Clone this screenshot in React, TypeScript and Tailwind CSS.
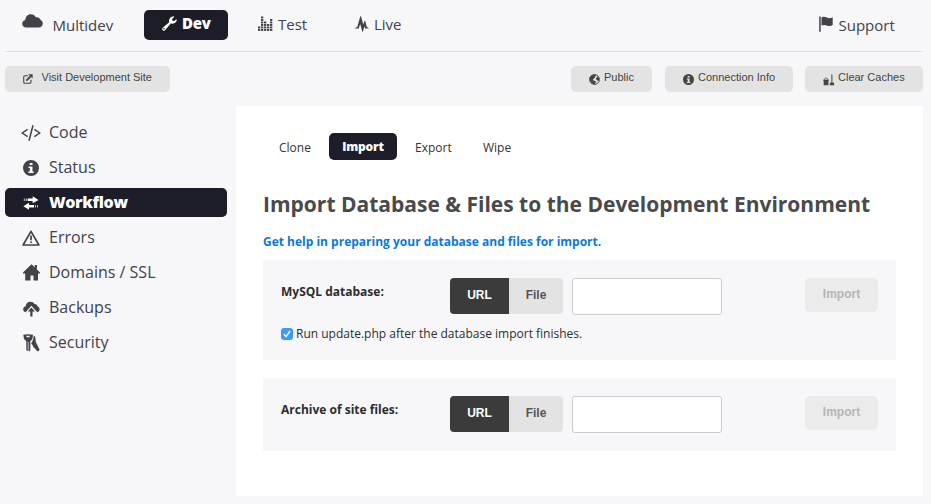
import type { ReactNode } from "react";

const CloudIcon = () => (
  <svg width="21" height="14" viewBox="0 0 21 14" fill="currentColor">
    <path d="M4.500 13.500C2 13.500.2 12 .2 9.800c0-1.900 1.300-3.300 3.100-3.700C3.400 2.600 5.800.3 8.800.3c2.300 0 4 1.100 5 2.900 2.600-.4 4.500 1 5 3.100 1.300.5 2 1.700 2 3.200 0 2.300-1.600 4-4.100 4z" />
  </svg>
);

const WrenchIcon = () => (
  <svg width="15" height="15" viewBox="0 0 15 15" fill="currentColor">
    <path d="M.5 12.100 7.100 6.300C6.500 3.600 8.200.7 11.600.3l.5.7-2 1.900.3 1.900 1.900.2 2-1.800.5.7C14.500 6.500 11.600 8.200 8.800 7.600L3 14.200c-.6.7-1.700.7-2.300 0-.6-.6-.7-1.500-.2-2.100zm1.500-.1a.8.8 0 1 0 0 1.600.8.8 0 0 0 0-1.600z" fillRule="evenodd" />
  </svg>
);

const EqualizerIcon = () => (
  <svg width="16" height="16" viewBox="0 0 16 16" fill="currentColor">
    {[2, 6, 4, 3, 5].map((n, c) =>
      Array.from({ length: n }, (_, r) => (
        <rect key={`${c}-${r}`} x={c * 3} y={13 - r * 2.5} width="2.300" height="1.900" />
      )),
    )}
  </svg>
);

const PulseIcon = () => (
  <svg width="15" height="16" viewBox="0 0 15 16" fill="currentColor">
    <path d="M.1 12.600 3.300 10.900 6.300.3H7l2.300 8.100 1.300-3.700h.6l1.500 6 2.200 1.900h-3.500l-1-2.100-1.500 5.200h-.6L6.200 7.900 4.700 12.600z" />
  </svg>
);

const FlagIcon = () => (
  <svg width="14" height="16" viewBox="0 0 14 16" fill="currentColor">
    <path d="M.2.5h1.500v15.200H.2zM2.500 1.400c2-.9 3.500-.6 5.300.2 2 .8 3.800.8 5.900-.4v7.900c-2.100 1.200-3.900 1.100-5.900.4-1.800-.7-3.300-.9-5.300 0z" />
  </svg>
);

const ExternalIcon = () => (
  <svg width="10" height="10" viewBox="0 0 10 10" fill="none" stroke="currentColor" strokeWidth="1.100">
    <path d="M5 1.700H2Q.7 1.700.7 3v5Q.7 9.300 2 9.300h4.700Q8 9.300 8 8V5.800" />
    <path d="M3.300 6.700 7.500 2.500" strokeWidth="1.900" />
    <path d="M5.200.2H9.600V4.600z" fill="currentColor" stroke="none" />
  </svg>
);

const GlobeIcon = () => (
  <svg width="11" height="11" viewBox="0 0 11 11">
    <circle cx="5.500" cy="5.500" r="4.900" fill="none" stroke="currentColor" strokeWidth="1" />
    <path d="M.8 3.500C1.500 1.500 3.800.4 6.500.8L7 2 5.800 2.600 6 3.700 4.800 4.500l-.9 1.300.9.900 1.700.2.5 1.200-1.200 2.100C3 10.300.2 7.500.8 3.500zM8.200 1.800l2 2.700-.3 2-1.100.4-.9-1.100L6.900 5.300l.3-1.500 1.200-.8z" fill="currentColor" />
  </svg>
);

const InfoIcon = ({ size }: { size: number }) => (
  <svg width={size} height={size} viewBox="0 0 16 16" fill="currentColor" fillRule="evenodd">
    <path d="M8 0a8 8 0 1 0 0 16A8 8 0 0 0 8 0zM6.700 2.900h2.800v2.200H6.700zM5.500 6.500h4v5h1.300V13H5.300v-1.500h1.500V8H5.500z" />
  </svg>
);

const BroomIcon = () => (
  <svg width="12" height="12" viewBox="0 0 12 12" fill="currentColor">
    <path d="M.3 5.700h5.500v1.300H.3zM.7 6.900h4.700v4.400H.7z" />
    <path d="M1.200 6C1.200 3.500 4.900 3.500 4.900 6" fill="none" stroke="currentColor" strokeWidth=".8" />
    <path d="M8.400.4h1v7.800h-1zM7.100 8.500h3.700l.5 2.800H6.600z" />
  </svg>
);

const CodeIcon = () => (
  <svg width="20" height="16" viewBox="0 0 20 16" fill="none" stroke="currentColor" strokeWidth="1.500">
    <path d="M6.600 4.300 1.200 8l5.400 3.700M13.400 4.300 18.800 8l-5.400 3.700M12 .3 8 15.700" />
  </svg>
);

const ArrowsIcon = () => (
  <svg width="16" height="14" viewBox="0 0 16 14" fill="currentColor">
    <path d="M4.700 2.600h5V.3L15.500 4 9.700 7.300V5.100h-5zM11 9H6V6.800L.3 10.300 6 13.700v-2.300h5z" />
    <path d="M.8 2.600h1v2.500h-1zM2.700 2.600h1.200v2.500H2.700zM11.900 9h1.100v2.400h-1.100zM14 9h1v2.400h-1z" opacity=".7" />
  </svg>
);

const WarningIcon = () => (
  <svg width="18" height="16" viewBox="0 0 18 16" fill="none" stroke="currentColor">
    <path d="M9 1.300 16.900 15H1.100z" strokeWidth="1.700" strokeLinejoin="round" />
    <path d="M9 5.600v4.600M9 11.400v1.700" strokeWidth="1.700" />
  </svg>
);

const HomeIcon = () => (
  <svg className="mb-px" width="17" height="17" viewBox="0 0 17 17" fill="currentColor">
    <path d="M8.500.3 11.700 3.300V1h2.200v4.400L17 8.500v1h-2V16.600h-4.500v-5.200h-3v5.200H2.200V9.500H0v-1z" />
  </svg>
);

const CloudUploadIcon = () => (
  <svg className="mt-px" width="17" height="16" viewBox="0 0 17 16" fill="currentColor">
    <path d="M3.400 11.300C1.400 11.300.2 10 .2 8.300c0-1.600 1-2.800 2.500-3.100C2.900 2.400 4.800.7 7.300.7c1.900 0 3.400.8 4.200 2.200 1.700 0 2.900 1 3.200 2.500 1.300.5 1.900 1.500 1.900 2.800 0 1.800-1.200 3.100-3.200 3.100z" />
    <path d="M8.400 6.600 12 10.500H9.500v5H7.300v-5H4.800z" stroke="#f7f7f9" strokeWidth="2.400" />
    <path d="M8.400 6.600 12 10.500H9.500v5H7.300v-5H4.800z" />
  </svg>
);

const KeysIcon = () => (
  <svg width="17" height="18" viewBox="0 0 17 18" fill="currentColor" fillRule="evenodd">
    <path d="M.3.800Q5-.4 10 .8L9.400 5 7.300 7.200v9.200L6 17.600 5.500 17V8h-.7v9.300l-1.500-1.200V7.200L1 5zM3.600 1.800v1.400h3V1.800z" />
    <path d="M10.700 1.800 12.200 2.700l.6 5.200 3.700 7.700-.7 1.700-2-.4-.9-1.700-1-.2-.3-1.200-1-.4-1.200-2.700-1.300-1 2-4z" />
  </svg>
);

const navItems: { label: string; icon: ReactNode; active?: boolean }[] = [
  { label: "Code", icon: <CodeIcon /> },
  { label: "Status", icon: <InfoIcon size={16} /> },
  { label: "Workflow", icon: <ArrowsIcon />, active: true },
  { label: "Errors", icon: <WarningIcon /> },
  { label: "Domains / SSL", icon: <HomeIcon /> },
  { label: "Backups", icon: <CloudUploadIcon /> },
  { label: "Security", icon: <KeysIcon /> },
];

function ToolButton({ className, icon, label }: { className: string; icon: ReactNode; label: string }) {
  return (
    <button
      className={`flex h-[26px] items-start rounded-[5px] bg-[#e3e3e3] font-['Liberation_Sans',Arial,sans-serif] text-[11px] leading-[23px] whitespace-nowrap text-[#444] ${className}`}
    >
      <span className="mt-2">{icon}</span>
      <span>{label}</span>
    </button>
  );
}

function ImportRow({ label }: { label: string }) {
  return (
    <div className="flex items-start">
      <div className="w-[169px] text-[12px] leading-[27px] font-bold">{label}</div>
      <div className="flex h-9 overflow-hidden rounded-[4px] font-['Liberation_Sans',Arial,sans-serif] text-[12px] font-bold">
        <button className="w-[59px] bg-[#3b3b3b] pb-[3px] text-white">URL</button>
        <button className="w-[54px] bg-[#e3e3e3] pb-[3px] text-[#555]">File</button>
      </div>
      <input className="ml-[9px] h-[37px] w-[150px] rounded-[3px] border border-[#ccc] bg-white" aria-label={label} />
      <button
        disabled
        className="ml-[83px] h-[34px] w-[73px] rounded-[5px] bg-[#ebebeb] pb-[2px] font-['Liberation_Sans',Arial,sans-serif] text-[12px] font-bold text-[#b5b5b5]"
      >
        Import
      </button>
    </div>
  );
}

export default function App() {
  return (
    <div className="h-[504px] w-[931px] overflow-hidden bg-[#f7f7f9] pl-[5px] font-['Open_Sans',sans-serif] text-[#2d2d2d]">
      <header className="flex h-[52px] w-[918px] items-start border-b border-[#e2e2e5] text-[15px] text-[#41424a]">
        <div className="flex w-[139px] pl-[17px]">
          <span className="mt-[14px]"><CloudIcon /></span>
          <span className="ml-[9.500px] mt-[15px] leading-[20px]">Multidev</span>
        </div>
        <div className="mt-[10px] flex h-[30px] w-[84px] rounded-[5px] bg-[#1d1d29] pl-[18px] text-white">
          <span className="mt-[6px]"><WrenchIcon /></span>
          <span className="ml-[5px] mt-[3px] leading-[20px] font-extrabold tracking-[-0.3px]">Dev</span>
        </div>
        <div className="ml-[30px] flex w-[96px]">
          <span className="mt-[16px]"><EqualizerIcon /></span>
          <span className="ml-[4px] mt-[14px] leading-[20px]">Test</span>
        </div>
        <div className="flex">
          <span className="mt-[16px]"><PulseIcon /></span>
          <span className="ml-[5px] mt-[14px] leading-[20px]">Live</span>
        </div>
        <div className="ml-auto flex w-[104px]">
          <span className="mt-[16px]"><FlagIcon /></span>
          <span className="ml-[5.500px] mt-[15px] leading-[20px]">Support</span>
        </div>
      </header>

      <div className="mt-[14px] flex w-[918px]">
        <ToolButton className="w-[165px] gap-[8.500px] pl-[18px]" icon={<ExternalIcon />} label="Visit Development Site" />
        <ToolButton className="ml-auto w-[81px] gap-1 pl-[18px]" icon={<GlobeIcon />} label="Public" />
        <ToolButton className="ml-[13px] w-[128px] gap-1 pl-[18px]" icon={<InfoIcon size={11} />} label="Connection Info" />
        <ToolButton className="ml-[12px] w-[118px] gap-[3px] pl-[18px]" icon={<BroomIcon />} label="Clear Caches" />
      </div>

      <div className="mt-[14px] flex">
        <nav className="mt-3 flex w-[222px] flex-col gap-[6px]">
          {navItems.map(({ label, icon, active }) => (
            <div
              key={label}
              className={`flex h-[29px] items-center rounded-[5px] pl-[16px] text-[16px] ${
                active ? "bg-[#1d1d29] font-bold text-white" : "text-[#41424a]"
              }`}
            >
              <span className="mt-px flex w-5 justify-center">{icon}</span>
              <span className={`mb-px ml-2 leading-[28px] ${active ? "font-extrabold tracking-[-0.35px]" : ""}`}>{label}</span>
            </div>
          ))}
        </nav>

        <main className="ml-[9px] h-[390px] w-[687px] bg-white px-[27px] pt-[27px]">
          <div className="flex h-[27px] items-center text-[12px] text-[#333]">
            <span className="w-[66px] pl-[16px] pt-[2px]">Clone</span>
            <span className="flex h-[27px] w-[68px] items-center justify-center rounded-[5px] bg-[#1d1d29] font-extrabold tracking-[-0.2px] text-white">
              Import
            </span>
            <span className="w-[68px] pl-[18px] pt-[2px]">Export</span>
            <span className="pl-[18px] pt-[2px]">Wipe</span>
          </div>
          <h1 className="mt-[29px] text-[21px] leading-[30px] font-bold whitespace-nowrap text-[#4a4a4a]">
            Import Database &amp; Files to the Development Environment
          </h1>
          <a className="mt-[13px] block text-[12px] leading-[20px] font-bold whitespace-nowrap text-[#0a79d8]">
            Get help in preparing your database and files for import.
          </a>
          <section className="mt-[8px] h-[100px] bg-[#f7f7f9] px-[18px] pt-[18px]">
            <ImportRow label="MySQL database:" />
            <label className="mt-[9px] flex items-center text-[12px] leading-[20px]">
              <span className="mb-px flex h-3 w-3 items-center justify-center rounded-[3px] bg-[#3b99fc]">
                <svg width="8" height="8" viewBox="0 0 8 8" fill="none" stroke="white" strokeWidth="1.500">
                  <path d="M1 4.300 3.100 6.600 7 1" />
                </svg>
              </span>
              <span className="ml-[3px]">Run update.php after the database import finishes.</span>
            </label>
          </section>
          <section className="mt-[18px] h-[73px] bg-[#f7f7f9] px-[18px] pt-[18px]">
            <ImportRow label="Archive of site files:" />
          </section>
        </main>
      </div>
    </div>
  );
}
